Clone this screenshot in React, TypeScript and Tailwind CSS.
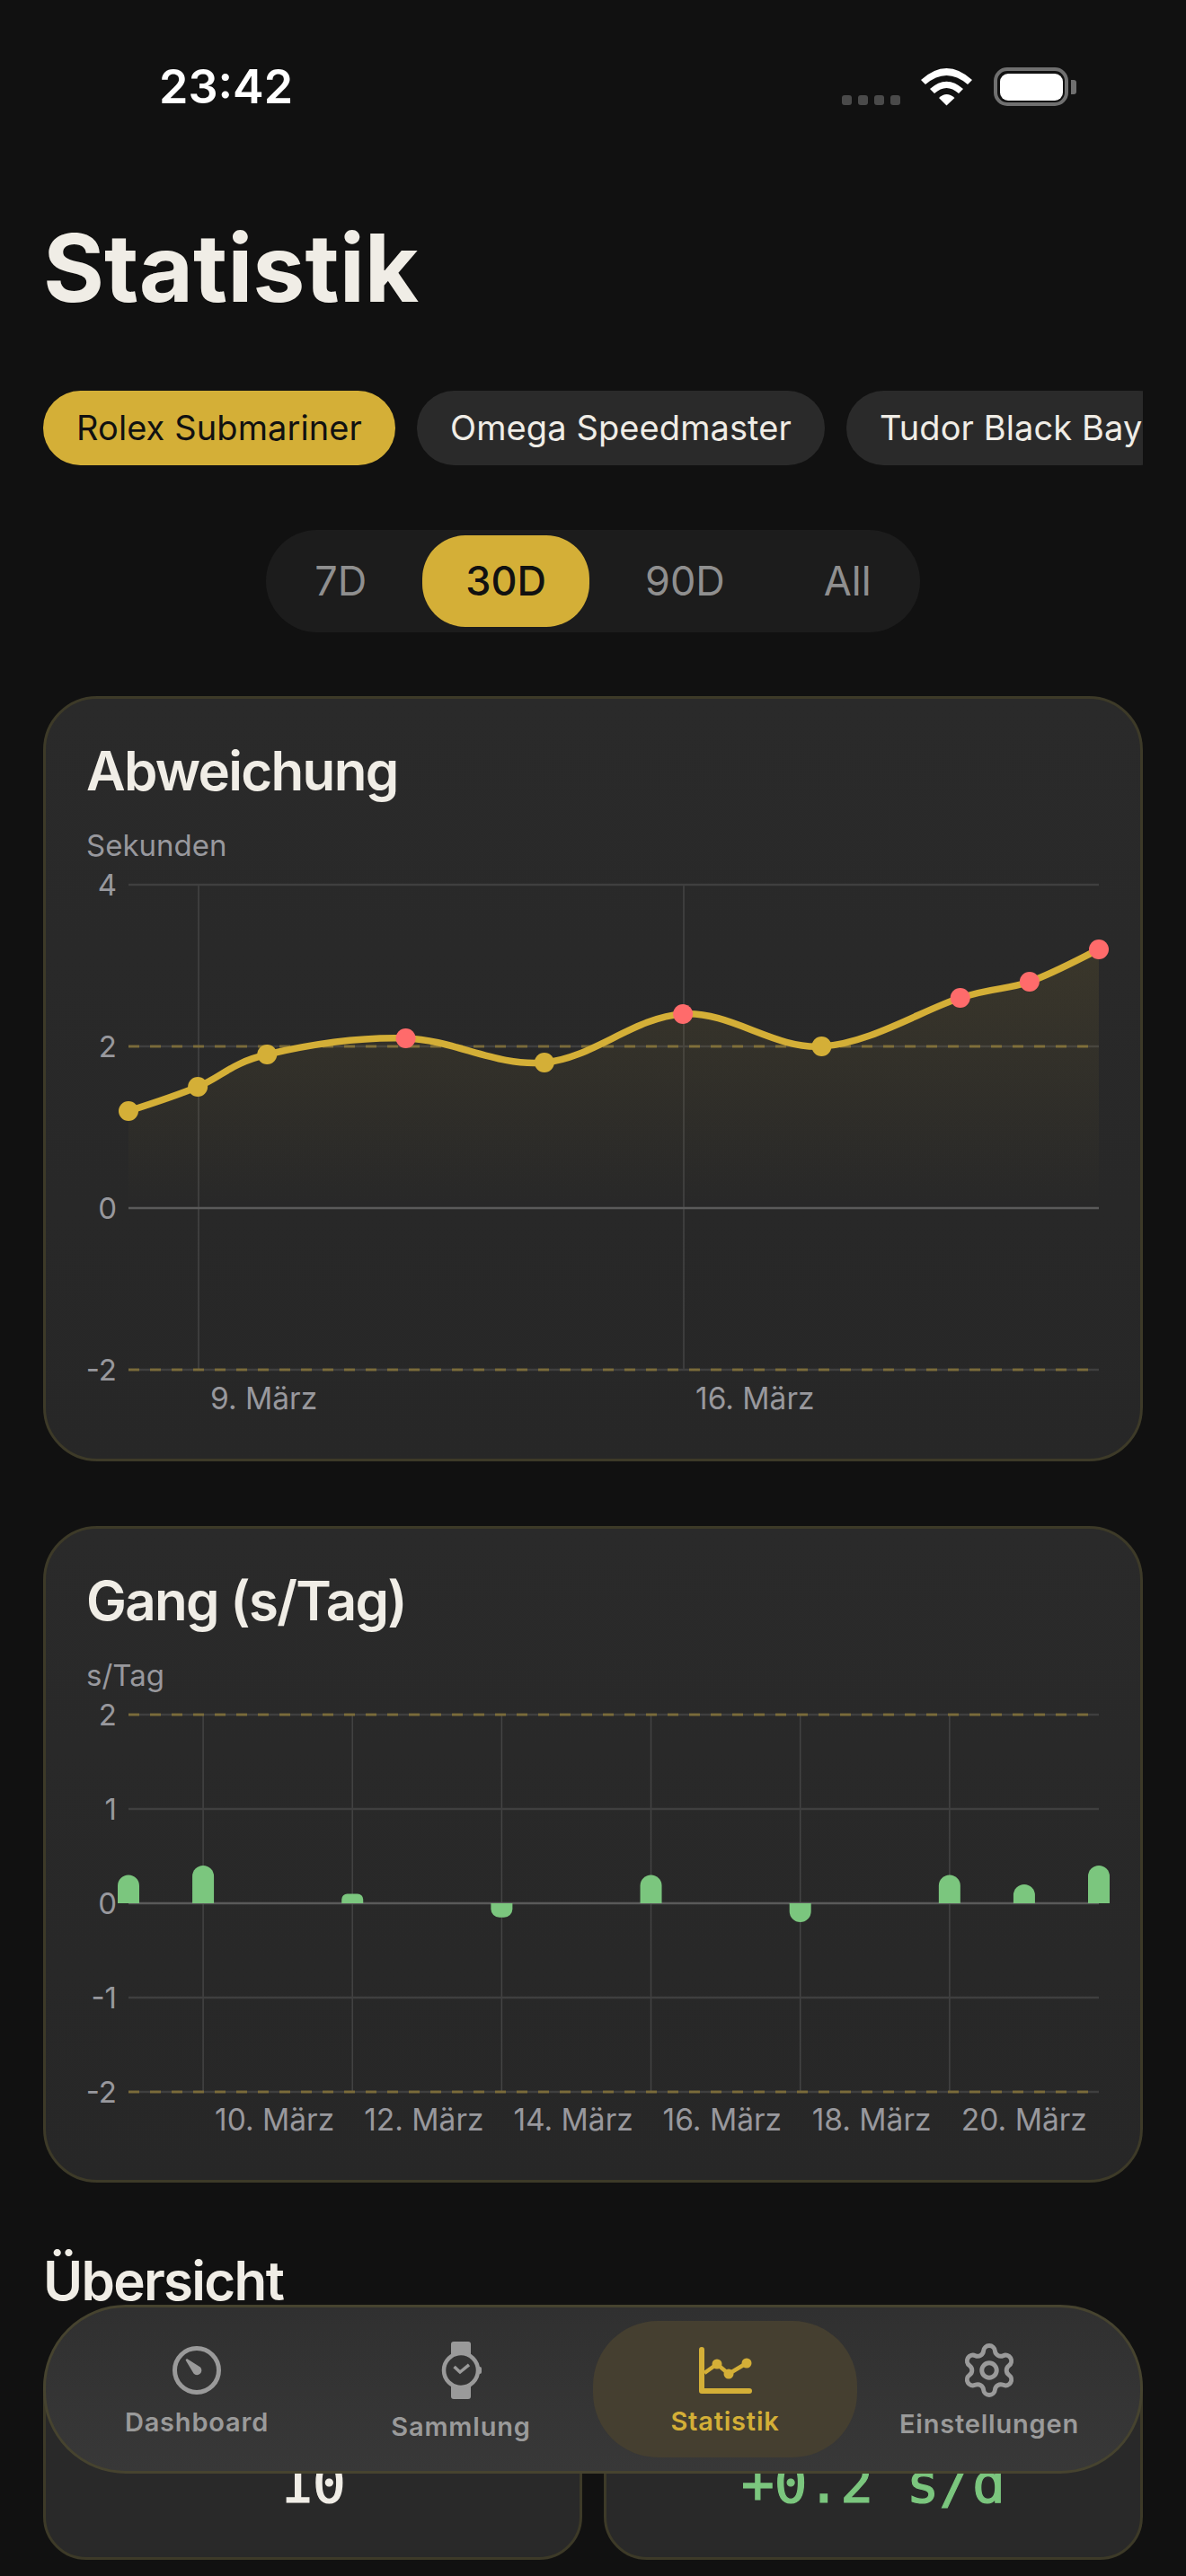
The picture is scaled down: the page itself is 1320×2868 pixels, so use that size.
import { Settings } from 'lucide-react';

const points = [
  { i: 0, v: 1.2 },
  { i: 1, v: 1.5 },
  { i: 2, v: 1.9 },
  { i: 4, v: 2.1 },
  { i: 6, v: 1.8 },
  { i: 8, v: 2.4 },
  { i: 10, v: 2.0 },
  { i: 12, v: 2.6 },
  { i: 13, v: 2.8 },
  { i: 14, v: 3.2 },
];

const bars = [
  { i: 0, v: 0.3 },
  { i: 1, v: 0.4 },
  { i: 3, v: 0.1 },
  { i: 5, v: -0.15 },
  { i: 7, v: 0.3 },
  { i: 9, v: -0.2 },
  { i: 11, v: 0.3 },
  { i: 12, v: 0.2 },
  { i: 13, v: 0.4 },
];

// plot area inside the svg, measured from the card's content box
const LEFT = 47;
const RIGHT = 1127;

function curvePath(pts: { x: number; y: number }[]) {
  const smooth = 0.35;
  let d = `M${pts[0].x} ${pts[0].y}`;
  let temp = { x: 0, y: 0 };
  for (let n = 1; n < pts.length; n++) {
    const prev = pts[n - 1];
    const cur = pts[n];
    const next = pts[n + 1] ?? cur;
    const c1 = { x: prev.x + temp.x, y: prev.y + temp.y };
    temp = { x: ((next.x - prev.x) / 2) * smooth, y: ((next.y - prev.y) / 2) * smooth };
    const c2 = { x: cur.x - temp.x, y: cur.y - temp.y };
    d += ` C${c1.x} ${c1.y} ${c2.x} ${c2.y} ${cur.x} ${cur.y}`;
  }
  return d;
}

function AxisLabel({ y, children }: { y: number; children: React.ReactNode }) {
  return (
    <text x={34} y={y + 12} textAnchor="end" className="fill-[#98989d] text-[33px]">
      {children}
    </text>
  );
}

function DeviationChart() {
  const top = 22;
  const unit = 90;
  const zero = top + unit * 4;
  const pts = points.map((p) => ({
    x: LEFT + (p.i * (RIGHT - LEFT)) / 14,
    y: zero - p.v * unit,
    over: Math.abs(p.v) > 2,
  }));
  const line = curvePath(pts);
  const area = `${line} L${RIGHT} ${zero} L${LEFT} ${zero} Z`;

  return (
    <svg width="1172" height="626" className="block overflow-visible">
      <defs>
        <linearGradient id="area" x1="0" y1="0" x2="0" y2="1">
          <stop offset="0%" stopColor="#d4af37" stopOpacity="0.1" />
          <stop offset="100%" stopColor="#d4af37" stopOpacity="0" />
        </linearGradient>
      </defs>
      {[125, 665].map((x) => (
        <line key={x} x1={x} x2={x} y1={top} y2={top + unit * 6} stroke="#444" strokeWidth="1.5" />
      ))}
      <line x1={LEFT} x2={RIGHT} y1={top} y2={top} stroke="#3f3f3f" strokeWidth="2.5" />
      <line x1={LEFT} x2={RIGHT} y1={top + unit * 2} y2={top + unit * 2} stroke="#3f3f3f" strokeWidth="2.5" />
      <line x1={LEFT} x2={RIGHT} y1={top + unit * 6} y2={top + unit * 6} stroke="#3f3f3f" strokeWidth="2.5" />
      <line x1={LEFT} x2={RIGHT} y1={zero} y2={zero} stroke="#5a5a5a" strokeWidth="2.5" />
      <line x1={LEFT} x2={RIGHT} y1={top + unit * 2} y2={top + unit * 2} stroke="#d4af37" strokeOpacity="0.4" strokeWidth="3" strokeDasharray="12 12" />
      <line x1={LEFT} x2={RIGHT} y1={top + unit * 6} y2={top + unit * 6} stroke="#d4af37" strokeOpacity="0.4" strokeWidth="3" strokeDasharray="12 12" />
      <path d={area} fill="url(#area)" />
      <path d={line} fill="none" stroke="#d4af37" strokeWidth="7.5" strokeLinecap="round" />
      {pts.map((p) => (
        <circle key={p.x} cx={p.x} cy={p.y} r="11" fill={p.over ? '#ff6b6b' : '#d4af37'} />
      ))}
      <AxisLabel y={top}>4</AxisLabel>
      <AxisLabel y={top + unit * 2}>2</AxisLabel>
      <AxisLabel y={zero}>0</AxisLabel>
      <AxisLabel y={top + unit * 6}>-2</AxisLabel>
      <text x={138} y={606} className="fill-[#98989d] text-[33.5px]">9. März</text>
      <text x={678} y={606} className="fill-[#98989d] text-[33.5px]">16. März</text>
    </svg>
  );
}

function RateChart() {
  const top = 22;
  const unit = 105;
  const zero = top + unit * 2;
  const step = (RIGHT - LEFT) / 13;
  const ticks = [1, 3, 5, 7, 9, 11];
  const labels = ['10. März', '12. März', '14. März', '16. März', '18. März', '20. März'];

  return (
    <svg width="1172" height="494" className="block overflow-visible">
      {ticks.map((t) => (
        <line key={t} x1={LEFT + t * step} x2={LEFT + t * step} y1={top} y2={top + unit * 4} stroke="#444" strokeWidth="1.5" />
      ))}
      {[0, 1, 3, 4].map((n) => (
        <line key={n} x1={LEFT} x2={RIGHT} y1={top + n * unit} y2={top + n * unit} stroke="#3f3f3f" strokeWidth="2.5" />
      ))}
      <line x1={LEFT} x2={RIGHT} y1={zero} y2={zero} stroke="#5a5a5a" strokeWidth="2.5" />
      {[0, 4].map((n) => (
        <line key={n} x1={LEFT} x2={RIGHT} y1={top + n * unit} y2={top + n * unit} stroke="#d4af37" strokeOpacity="0.4" strokeWidth="3" strokeDasharray="12 12" />
      ))}
      {bars.map((b) => {
        const x = LEFT + b.i * step - 12;
        const h = Math.abs(b.v) * unit;
        const r = Math.min(12, h * 0.6);
        const dir = b.v > 0 ? -1 : 1;
        const end = zero + dir * h;
        const sweep = b.v > 0 ? 1 : 0;
        const d = `M${x} ${zero} V${end - dir * r} A${r} ${r} 0 0 ${sweep} ${x + r} ${end} H${x + 24 - r} A${r} ${r} 0 0 ${sweep} ${x + 24} ${end - dir * r} V${zero} Z`;
        return <path key={b.i} d={d} fill="#7bc67e" />;
      })}
      <AxisLabel y={top}>2</AxisLabel>
      <AxisLabel y={top + unit}>1</AxisLabel>
      <AxisLabel y={zero}>0</AxisLabel>
      <AxisLabel y={top + unit * 3}>-1</AxisLabel>
      <AxisLabel y={top + unit * 4}>-2</AxisLabel>
      {labels.map((l, n) => (
        <text key={l} x={LEFT + ticks[n] * step + 13} y={485} className="fill-[#98989d] text-[33.5px]">
          {l}
        </text>
      ))}
    </svg>
  );
}

function DashboardIcon() {
  return (
    <svg width="54" height="54" viewBox="0 0 54 54" fill="none">
      <circle cx="27" cy="27" r="24.5" stroke="currentColor" strokeWidth="5" />
      <path d="M14.5 15.5 L16 14 L31 23.5 A5 5 0 1 1 23.5 30.5 Z" fill="currentColor" />
    </svg>
  );
}

function WatchIcon() {
  return (
    <svg width="50" height="64" viewBox="0 0 50 64" fill="none">
      <rect x="14" y="0" width="22" height="64" rx="3" fill="currentColor" />
      <rect x="43" y="28" width="5" height="8" rx="2" fill="currentColor" />
      <circle cx="25" cy="32" r="19" fill="#333333" stroke="currentColor" strokeWidth="4.5" />
      <path d="M17.5 28 L24 34 L34 25.8" stroke="currentColor" strokeWidth="3.5" />
    </svg>
  );
}

function StatsIcon() {
  return (
    <svg width="59" height="52" viewBox="0 0 59 52" fill="none" stroke="currentColor">
      <path d="M3 3 V49 H56" strokeWidth="6" strokeLinecap="round" strokeLinejoin="round" />
      <path d="M6 29 L20 19 L33 30 L53 18" strokeWidth="4.5" />
      <circle cx="20" cy="19" r="5.5" fill="currentColor" stroke="none" />
      <circle cx="33" cy="30" r="5.5" fill="currentColor" stroke="none" />
      <circle cx="53" cy="18" r="5.5" fill="currentColor" stroke="none" />
    </svg>
  );
}

function NavItem({ label, active, icon }: { label: string; active?: boolean; icon: React.ReactNode }) {
  return (
    <div
      className={`flex w-[294px] flex-col items-center justify-center gap-[16px] rounded-[72px] pt-[4px] ${
        active ? 'bg-[#453f30] text-[#d4af37]' : 'text-[#9a9a9a]'
      }`}
    >
      {icon}
      <span className="text-[29px] leading-[30px] font-semibold tracking-[0.8px]">{label}</span>
    </div>
  );
}

function Card({ title, unit, children }: { title: string; unit: string; children: React.ReactNode }) {
  return (
    <div className="h-full rounded-[60px] border-[3px] border-[#3d3a28] bg-linear-to-b from-[#2a2a2a] to-[#272727] px-[45px] pt-[44px]">
      <h2 className="text-[60px] leading-[72px] font-semibold tracking-[-1.7px] text-[#f0ede6]">{title}</h2>
      <div className="mt-[25px] text-[33px] leading-[44px] text-[#98989d]">{unit}</div>
      {children}
    </div>
  );
}

export default function App() {
  return (
    <div className="relative h-[2868px] w-[1320px] overflow-hidden bg-[#111111] font-[Inter] text-[#f0ede6]">
      {/* status bar */}
      <div className="flex h-[238px] items-start justify-between pt-[65px] pr-[122px] pl-[177px]">
        <span className="text-[52px] leading-[64px] font-semibold text-white">23:42</span>
        <div className="mt-[10px] flex items-end">
          <div className="flex gap-[7px] pb-[1px]">
            <div className="size-[11px] rounded-[3px] bg-[#4a4a4a]" />
            <div className="size-[11px] rounded-[3px] bg-[#4a4a4a]" />
            <div className="size-[11px] rounded-[3px] bg-[#4a4a4a]" />
            <div className="size-[11px] rounded-[3px] bg-[#4a4a4a]" />
          </div>
          <svg width="57" height="42" viewBox="0 0 57 42" className="ml-[23px]" fill="white">
            <path d="M0 13 Q28.5 -13 57 13 L52 18 Q28.5 -2 5 18 Z" />
            <path d="M10 23 Q28.5 6.4 47 23 L42 28 Q28.5 16 15 28 Z" />
            <path d="M20 33 Q28.5 25 37.5 33 L28.5 41.5 Z" />
          </svg>
          <div className="ml-[24px] flex items-center">
            <div className="h-[43px] w-[83px] rounded-[15px] border-[4.5px] border-[#707070] p-[2.5px]">
              <div className="h-full w-full rounded-[9px] bg-white" />
            </div>
            <div className="ml-[3px] h-[16px] w-[6px] rounded-r-[3px] bg-[#707070]" />
          </div>
        </div>
      </div>

      <div className="px-[48px]">
        <h1 className="text-[104px] leading-[120px] font-bold text-[#f0ede6]">Statistik</h1>

        {/* watch picker */}
        <div className="mt-[77px] flex gap-[24px] overflow-hidden">
          <div className="h-[83px] shrink-0 rounded-full bg-[#d4af37] px-[37px] text-[38px] leading-[83px] tracking-[0.1px] text-[#111111]">Rolex Submariner</div>
          <div className="h-[83px] shrink-0 rounded-full bg-[#2a2a2a] px-[37px] text-[38px] leading-[83px] tracking-[0.1px]">Omega Speedmaster</div>
          <div className="h-[83px] shrink-0 rounded-full bg-[#2a2a2a] px-[37px] text-[38px] leading-[83px] tracking-[0.1px]">Tudor Black Bay</div>
        </div>

        {/* range */}
        <div className="mt-[72px] flex justify-center">
          <div className="flex gap-[14px] rounded-full bg-[#1c1c1c] p-[6px] text-[45px] leading-[102px] text-[#8f8f8f]">
            <div className="rounded-[48px] px-[48px]">7D</div>
            <div className="rounded-[48px] bg-[#d4af37] px-[48px] font-medium text-[#111111]">30D</div>
            <div className="rounded-[48px] px-[48px]">90D</div>
            <div className="rounded-[48px] px-[48px]">All</div>
          </div>
        </div>

        <div className="mt-[71px] h-[852px]">
          <Card title="Abweichung" unit="Sekunden">
            <DeviationChart />
          </Card>
        </div>

        <div className="mt-[72px] h-[731px]">
          <Card title="Gang (s/Tag)" unit="s/Tag">
            <RateChart />
          </Card>
        </div>

        <h2 className="mt-[73px] text-[60px] leading-[72px] font-semibold tracking-[-1.7px] text-[#f0ede6]">Übersicht</h2>

        <div className="mt-[36px] grid grid-cols-2 gap-[24px] font-['DejaVu_Sans_Mono',monospace] text-[61px] leading-[72px] [-webkit-text-stroke:1.2px_currentColor]">
          <div className="h-[239px] rounded-[48px] border-[3px] border-[#3d3a28] bg-[#292929] pt-[115px] text-center">10</div>
          <div className="h-[239px] rounded-[48px] border-[3px] border-[#3d3a28] bg-[#292929] pt-[115px] text-center text-[#7bc67e]">+0.2 s/d</div>
        </div>
      </div>

      {/* floating tab bar */}
      <div className="absolute top-[2566px] left-[48px] flex h-[188px] w-[1224px] justify-center rounded-[92px] border-[3px] border-[#46432f] bg-linear-to-b from-[#303030] to-[#383838] py-[15px]">
        <NavItem label="Dashboard" icon={<DashboardIcon />} />
        <NavItem label="Sammlung" icon={<WatchIcon />} />
        <NavItem label="Statistik" active icon={<StatsIcon />} />
        <NavItem label="Einstellungen" icon={<Settings size={66} strokeWidth={1.8} className="-my-[4px]" />} />
      </div>
    </div>
  );
}
